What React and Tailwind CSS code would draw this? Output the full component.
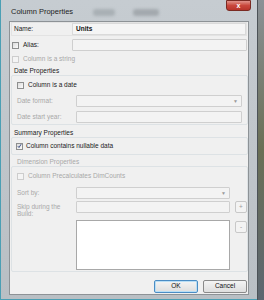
import React from 'react'

const Check = ({ checked, disabled }) => (
  <span
    className={`w-[7px] h-[7px] shrink-0 border flex items-center justify-center ${
      disabled ? 'border-[#cdcdcd] bg-[#f4f4f4]' : 'border-[#8e8f8f] bg-gradient-to-br from-[#dcdcdc] to-[#fbfbfb]'
    }`}
  >
    {checked && (
      <svg width="6" height="6" viewBox="0 0 6 6">
        <path d="M1 3.2 L2.4 4.8 L5 0.8" stroke="#2b3d78" strokeWidth="1.1" fill="none" />
      </svg>
    )}
  </span>
)

const Field = ({ className = '', children, arrow }) => (
  <div className={`h-[12px] border border-[#cfcfcf] bg-[#f3f3f3] rounded-[1px] flex items-center justify-between px-[3px] ${className}`}>
    <span>{children}</span>
    {arrow && <span className="text-[5px] text-[#9a9a9a] leading-none">▼</span>}
  </div>
)

const Row = ({ label, children, className = '' }) => (
  <div className={`flex items-center ${className}`}>
    <span className="w-[59px] shrink-0 text-[#a8a8a8]">{label}</span>
    {children}
  </div>
)

const Button = ({ children, focused }) => (
  <div
    className={`w-[44px] h-[13px] rounded-[2px] border flex items-center justify-center bg-gradient-to-b from-[#f4f4f4] to-[#dedede] text-[#111] ${
      focused ? 'border-[#4a8cc4] shadow-[inset_0_0_0_1px_#b9def5]' : 'border-[#8a8a8a]'
    }`}
  >
    {children}
  </div>
)

export default function App() {
  return (
    <div className="w-[264px] h-[300px] flex overflow-hidden bg-[#6f787e] font-['Liberation_Sans',sans-serif] text-[6.5px] leading-none text-[#1b1b1b]">
      <div className="w-[257px] h-full flex flex-col border-l border-b border-[#4b9fb4] bg-gradient-to-b from-[#c6ccd1] to-[#b9bfc4]">
        {/* title bar */}
        <div className="h-[21px] flex items-start shrink-0">
          <span className="ml-[10px] mt-[8px] text-[7.5px] text-[#1e1e1e]">Column Properties</span>
          <div className="ml-[20px] mt-[9px] w-[22px] h-[7px] rounded-[3px] bg-[#a9b0b5] blur-[1.5px]" />
          <div className="ml-[18px] mt-[9px] w-[26px] h-[7px] rounded-[3px] bg-[#a3a9ae] blur-[1.5px]" />
          <div className="ml-auto mr-[6px] w-[25px] h-[11px] rounded-b-[3px] border border-[#7a2a22] bg-gradient-to-b from-[#e0928a] via-[#c9473c] to-[#b8342a] flex items-center justify-center">
            <span className="text-white text-[7px] font-bold leading-none">x</span>
          </div>
        </div>

        {/* client area */}
        <div className="flex-1 mx-[8px] border border-[#8d9296] bg-[#f0f0f0] flex flex-col px-[1px]">
          {/* name */}
          <div className="h-[14px] border border-[#e3e3e3] flex items-center">
            <span className="w-[60px] pl-[2px]">Name:</span>
            <div className="flex-1 h-[12px] border border-[#dadada] bg-[#f5f5f5] flex items-center px-[3px] font-bold text-[#111]">
              Units
            </div>
          </div>

          {/* alias */}
          <div className="mt-[3px] flex items-center">
            <div className="w-[61px] flex items-center gap-[4px] pl-[1px]">
              <Check />
              <span>Alias:</span>
            </div>
            <Field className="flex-1" />
          </div>

          <div className="mt-[4px] h-[8px] flex items-center gap-[4px] pl-[1px] text-[#a8a8a8]">
            <Check disabled />
            <span>Column is a string</span>
          </div>

          {/* date properties */}
          <div className="mt-[4px] h-[8px] flex items-center pl-[3px]">Date Properties</div>
          <div className="mr-[-1px] border border-[#dde2e5] rounded-[2px] px-[5px] pt-[6px] pb-[1px] flex flex-col">
            <div className="h-[7px] flex items-center gap-[4px]">
              <Check />
              <span>Column is a date</span>
            </div>
            <Row label="Date format:" className="mt-[6px]">
              <Field className="flex-1" arrow />
            </Row>
            <Row label="Date start year:" className="mt-[4px]">
              <Field className="flex-1" />
            </Row>
          </div>

          {/* summary properties */}
          <div className="mt-[4px] h-[8px] flex items-center pl-[3px]">Summary Properties</div>
          <div className="mr-[-1px] border border-[#dde2e5] rounded-[2px] px-[4px] py-[4px] h-[18px] flex items-center gap-[3px]">
            <Check checked />
            <span>Column contains nullable data</span>
          </div>

          {/* dimension properties */}
          <div className="mt-[3px] h-[8px] flex items-center pl-[6px] text-[#a8a8a8]">Dimension Properties</div>
          <div className="mr-[-1px] border border-[#dde2e5] rounded-[2px] pl-[5px] pr-[3px] pt-[5px] pb-[1px] flex flex-col">
            <div className="h-[8px] flex items-center gap-[4px] text-[#a8a8a8]">
              <Check disabled />
              <span>Column Precalculates DimCounts</span>
            </div>
            <div className="mt-[7px] flex">
              <div className="flex flex-col text-[#a8a8a8]">
                <span className="w-[59px] h-[12px] flex items-center">Sort by:</span>
                <span className="w-[59px] mt-[4px] leading-[7px]">Skip during the<br />Build:</span>
              </div>
              <div className="flex-1 flex flex-col">
                <Field className="w-[154px]" arrow />
                <div className="mt-[2px] flex items-center gap-[5px]">
                  <Field className="w-[154px]" />
                  <div className="w-[12px] h-[12px] border border-[#c8c8c8] rounded-[2px] bg-[#f3f3f3] text-[#9c9c9c] flex items-center justify-center">+</div>
                </div>
                <div className="mt-[7px] flex items-start gap-[5px]">
                  <div className="w-[154px] h-[50px] border border-[#a8a8a8] bg-white" />
                  <div className="mt-[1px] w-[12px] h-[12px] border border-[#c8c8c8] rounded-[2px] bg-[#f3f3f3] text-[#9c9c9c] flex items-center justify-center">-</div>
                </div>
              </div>
            </div>
          </div>

          {/* buttons */}
          <div className="mt-[8px] flex justify-end gap-[5px]">
            <Button focused>OK</Button>
            <Button>Cancel</Button>
          </div>
        </div>
        <div className="h-[4px] shrink-0" />
      </div>
      <div className="flex-1 h-full bg-gradient-to-b from-[#8b9196] via-[#6a6f55] to-[#5c6670] border-l border-[#4c5257]" />
    </div>
  )
}
